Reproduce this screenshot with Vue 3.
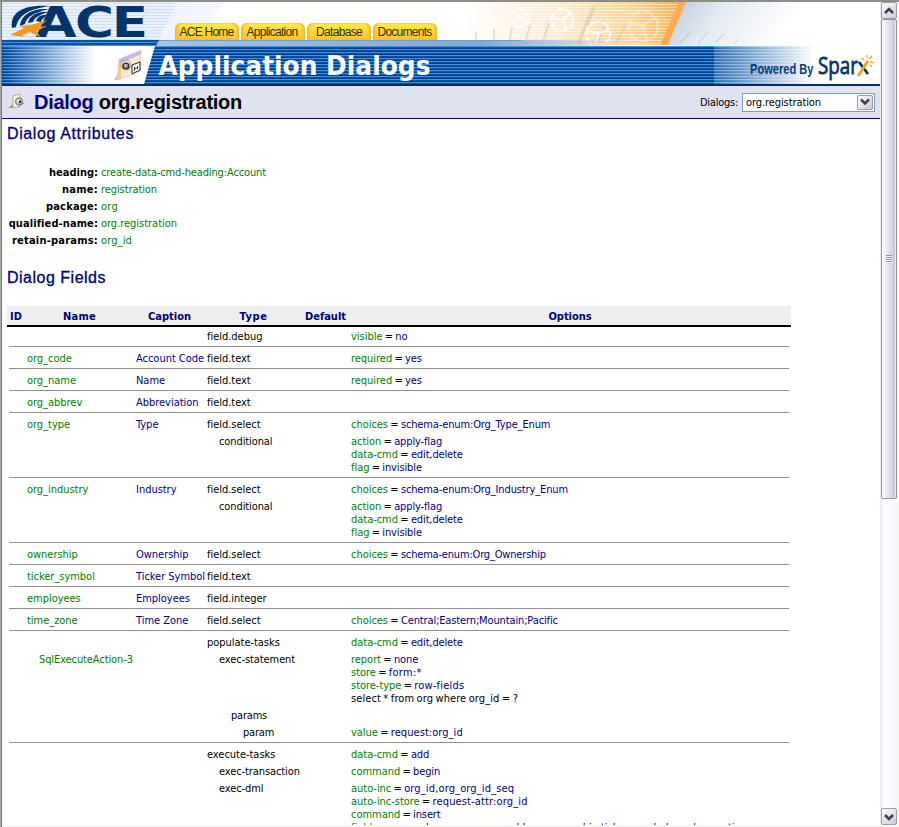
<script setup>
const tabs = [
  { label: 'ACE Home', width: 54, shift: 0 },
  { label: 'Application', width: 51, shift: -1 },
  { label: 'Database', width: 46, shift: 1 },
  { label: 'Documents', width: 54, shift: 0 },
]

const attributes = [
  ['heading', 'create-data-cmd-heading:Account', 49, 165],
  ['name', 'registration', 36, 56],
  ['package', 'org', 52, 17],
  ['qualified-name', 'org.registration', 89, 76],
  ['retain-params', 'org_id', 86, 31],
]

const columns = [['ID', 12], ['Name', 33], ['Caption', 43], ['Type', 28], ['Default', 41], ['Options', 43]]

const groups = [
  [{ type: 'field.debug', options: [['visible', 'no']] }],
  [{ name: 'org_code', caption: 'Account Code', type: 'field.text', options: [['required', 'yes']] }],
  [{ name: 'org_name', caption: 'Name', type: 'field.text', options: [['required', 'yes']] }],
  [{ name: 'org_abbrev', caption: 'Abbreviation', type: 'field.text' }],
  [
    { name: 'org_type', caption: 'Type', type: 'field.select', options: [['choices', 'schema-enum:Org_Type_Enum']] },
    { type: 'conditional', level: 1, options: [['action', 'apply-flag'], ['data-cmd', 'edit,delete'], ['flag', 'invisible']] },
  ],
  [
    { name: 'org_industry', caption: 'Industry', type: 'field.select', options: [['choices', 'schema-enum:Org_Industry_Enum']] },
    { type: 'conditional', level: 1, options: [['action', 'apply-flag'], ['data-cmd', 'edit,delete'], ['flag', 'invisible']] },
  ],
  [{ name: 'ownership', caption: 'Ownership', type: 'field.select', options: [['choices', 'schema-enum:Org_Ownership', 145]] }],
  [{ name: 'ticker_symbol', caption: 'Ticker Symbol', type: 'field.text' }],
  [{ name: 'employees', caption: 'Employees', type: 'field.integer' }],
  [{ name: 'time_zone', caption: 'Time Zone', type: 'field.select', options: [['choices', 'Central;Eastern;Mountain;Pacific']] }],
  [
    { type: 'populate-tasks', options: [['data-cmd', 'edit,delete']] },
    {
      name: 'SqlExecuteAction-3', nested: true, type: 'exec-statement', level: 1,
      options: [['report', 'none'], ['store', 'form:*', 33], ['store-type', 'row-fields', 50], ['select * from org where org_id = ?', '', 167]],
    },
    { type: 'params', level: 2 },
    { type: 'param', level: 3, options: [['value', 'request:org_id', 72]] },
  ],
  [
    { type: 'execute-tasks', options: [['data-cmd', 'add']] },
    { type: 'exec-transaction', level: 1, options: [['command', 'begin']] },
    {
      type: 'exec-dml', level: 1,
      options: [
        ['auto-inc', 'org_id,org_org_id_seq', 110],
        ['auto-inc-store', 'request-attr:org_id', 95],
        ['command', 'insert'],
        ['fields', 'org_code,org_name,org_abbrev,ownership,ticker_symbol,employees,time_zone', 388],
      ],
    },
  ],
]

// Tracks the letters of an inline-block so that it takes the given width.
const vFit = {
  mounted(el, { value }) {
    if (!value) return
    el.style.letterSpacing = '0px'
    const width = el.getBoundingClientRect().width
    el.style.letterSpacing = `${(value - width) / el.textContent.length}px`
  },
}
</script>

<template>
  <div class="window">
    <main class="page">
      <header class="banner">
        <svg class="art" width="878" height="84" viewBox="2 2 878 84">
          <defs>
            <pattern id="pale" width="4" height="3" patternUnits="userSpaceOnUse">
              <rect width="4" height="3" fill="#e9f1fb" /><rect width="4" height="1" fill="#d3e0f3" />
            </pattern>
            <pattern id="blue" width="4" height="3" patternUnits="userSpaceOnUse">
              <rect width="4" height="3" fill="#003c8c" /><rect width="4" height="1" y="1" fill="#3f93dc" /><rect width="4" height="1" y="2" fill="#0a52a8" />
            </pattern>
            <pattern id="cream" width="4" height="3" patternUnits="userSpaceOnUse">
              <rect width="4" height="1" y="1" fill="#fff" opacity=".55" />
            </pattern>
            <linearGradient id="fadeIn"><stop offset="0" stop-color="#fff" stop-opacity="0" /><stop offset="1" stop-color="#fff" /></linearGradient>
            <linearGradient id="orange"><stop offset="0" stop-color="#fff" /><stop offset=".45" stop-color="#fdebcf" /><stop offset=".8" stop-color="#fdd391" /><stop offset="1" stop-color="#fdb04c" /></linearGradient>
            <linearGradient id="steel" x2="1" y2=".25"><stop offset="0" stop-color="#b9c9dc" /><stop offset=".45" stop-color="#e5ebf2" /><stop offset="1" stop-color="#fff" /></linearGradient>
            <linearGradient id="band"><stop offset="0" stop-color="#a9c4e6" /><stop offset="1" stop-color="#7fa8d4" /></linearGradient>
            <linearGradient id="bandOut"><stop offset="0" stop-color="#7fa8d4" /><stop offset="1" stop-color="#7fa8d4" stop-opacity="0" /></linearGradient>
          </defs>
          <rect x="2" y="2" width="879" height="84" fill="#fff" />
          <path d="M2 2H177L157 45H2Z" fill="url(#pale)" />
          <path d="M177 2H225L196 40H160Z" fill="#eef3fc" />
          <rect x="170" y="2" width="130" height="38" fill="url(#fadeIn)" />
          <path d="M462 2H681L663 45H462Z" fill="url(#orange)" />
          <path d="M462 2H681L663 45H462Z" fill="url(#cream)" />
          <path d="M685 2H800V45H667Z" fill="url(#steel)" />
          <path d="M679 2H686L668 45H660Z" fill="#ffab51" />
          <g fill="none" stroke="#d8b6a0" stroke-width="2" opacity=".4">
            <path d="M476 32V44M494 29V44M512 27L509 44M530 25L525 44M549 23L542 44M606 24L597 44M627 23L615 44" />
            <path d="M594 7L578 44" stroke-width="4" />
            <path d="M690 32L680 43M708 32L698 43M724 34L716 42M738 39L734 44" stroke="#7f93aa" stroke-width="1" />
          </g>
          <g fill="none" stroke="#fff" stroke-width="2.500" opacity=".8">
            <circle cx="520" cy="18" r="9" stroke-dasharray="8 2" /><path d="M514 13L520 19L527 14" />
            <circle cx="562" cy="20" r="11" stroke-dasharray="9 2" /><path d="M551 18L562 20L571 14M562 20L567 29" />
            <circle cx="598" cy="34" r="12" stroke-dasharray="10 2" /><path d="M587 31L599 33L609 30M599 33L596 44" />
            <g opacity=".45"><circle cx="643" cy="26" r="15" stroke-dasharray="12 2" /><path d="M629 23L643 26L655 17M643 26L647 39" /></g>
          </g>
          <path d="M152 40H482V46H152Z" fill="url(#band)" />
          <rect x="482" y="40" width="145" height="6" fill="url(#bandOut)" />
          <rect x="152" y="40" width="370" height="1" fill="#7a9dc4" />
          <rect x="2" y="46" width="712" height="38" fill="url(#blue)" />
          <rect x="714" y="46" width="167" height="38" fill="url(#blue)" opacity=".78" />
          <rect x="714" y="46" width="100" height="38" fill="url(#fadeIn)" />
          <rect x="813" y="46" width="68" height="38" fill="#fff" />
          <rect x="2" y="46" width="93" height="38" fill="url(#fadeIn)" />
          <path d="M94 46H155L144 84H94Z" fill="#fff" />
          <path d="M2 40H159L156 46H2Z" fill="#0d4fa5" />
          <path d="M2 42.500H158M2 45.500H156" stroke="#5ba2df" stroke-width=".8" />
          <rect x="2" y="84" width="879" height="2" fill="#002e66" />
          <g fill="#04346a">
            <path d="M12 28C10 13 22 4 50 6C30 9 19 14 16 27Z" />
            <path d="M20 26C21 14 33 8 49 9C35 12 26 17 25 24Z" />
            <path d="M28 23C30 15 38 11 48 12C39 15 34 18 33 22Z" />
            <path d="M36 21C38 16 42 14 48 15C43 18 41 20 41 22Z" />
          </g>
          <text transform="scale(1.25 1)" x="28.500 60 89.500" y="37" class="logo">ACE</text>
          <path d="M10 35L24 28L20 26L31 25L47 20L39 27L47 26L37 31L40 37L30 32L22 35L25 37Z" fill="#f8951d" />
          <path d="M119 60L141 51L140 71L118 80Z" fill="#faeacb" stroke="#cbbda6" stroke-width=".6" />
          <path d="M119 59L141 50V54L119 64Z" fill="#c3b8e8" />
          <path d="M118 64L121 62V78L118 80Z" fill="#f3c98f" />
          <path d="M114 80L118 73V80Z" fill="#c9c9c9" />
          <circle cx="126" cy="65" r="5" fill="none" stroke="#a4a4a4" /><circle cx="126" cy="66" r="3" fill="#888" stroke="#222" stroke-width="1.200" /><circle cx="125.500" cy="65.500" r="1" fill="#fff" />
          <path d="M132 65L140 62V70L132 74Z" fill="#fff" stroke="#222" /><path d="M134.500 67V71M137.500 66V69M134 69L138 67.500" stroke="#222" stroke-width=".8" />
          <text x="158.500" y="75" textLength="272" lengthAdjust="spacingAndGlyphs" class="banner-title">Application Dialogs</text>
          <text x="750" y="74" textLength="63.500" lengthAdjust="spacingAndGlyphs" class="powered">Powered By</text>
          <text x="818" y="74" textLength="40" lengthAdjust="spacingAndGlyphs" class="sparx">Spar</text>
          <path d="M859 62L868 74" stroke="#003468" stroke-width="2.600" />
          <path d="M858 76L868 61" stroke="#f6a21c" stroke-width="3" />
          <path d="M869 59L872 56M870 62L874 63M867 58V55M864 60L862 58M870 65L872 67" stroke="#f6a21c" stroke-width="1.200" />
        </svg>
        <nav class="tabs">
          <a v-for="tab in tabs" :key="tab.label" class="tab">
            <span v-fit="tab.width" class="fit" :style="{ marginLeft: tab.shift + 'px' }">{{ tab.label }}</span>
          </a>
        </nav>
      </header>

      <section class="titlebar">
        <svg width="18" height="18" viewBox="0 0 18 18">
          <path d="M5 3L12 1V13L5 15Z" fill="#fff7dc" stroke="#a3a08c" stroke-width=".8" />
          <path d="M0 15L5 11V15Z" fill="#9c9c9c" />
          <circle cx="11" cy="8.500" r="3.600" fill="#bbb" stroke="#777" /><circle cx="10.500" cy="8" r="1.400" fill="#fff" /><circle cx="12" cy="8.800" r="1.200" fill="#222" />
          <path d="M10 14L16 10" stroke="#888" />
        </svg>
        <h1><span v-fit="208" class="fit"><b>Dialog</b> org.registration</span></h1>
        <label><span v-fit="38" class="fit">Dialogs:</span></label>
        <div class="select">
          <span v-fit="75" class="fit">org.registration</span>
          <i class="drop"><svg width="10" height="8" viewBox="0 0 10 8"><path d="M1 1.500L5 5.500L9 1.500" fill="none" stroke="#3c4454" stroke-width="2.600" /></svg></i>
        </div>
      </section>

      <h2><span v-fit="127" class="fit">Dialog Attributes</span></h2>
      <dl class="attributes">
        <template v-for="[key, value, keyWidth, valueWidth] in attributes" :key="key">
          <dt><span v-fit="keyWidth" class="fit">{{ key }}:</span></dt>
          <dd><span v-fit="valueWidth" class="fit">{{ value }}</span></dd>
        </template>
      </dl>

      <h2 class="second"><span v-fit="99" class="fit">Dialog Fields</span></h2>
      <div class="fields">
        <div class="row head">
          <span v-for="[column, width] in columns" :key="column"><span v-fit="width" class="fit">{{ column }}</span></span>
        </div>
        <template v-for="(group, g) in groups" :key="g">
          <div v-for="(row, r) in group" :key="r" class="row">
            <span></span>
            <span class="key" :class="{ nested: row.nested }">{{ row.name }}</span>
            <span class="val">{{ row.caption }}</span>
            <span :class="'level' + (row.level || 0)">{{ row.type }}</span>
            <span></span>
            <span class="options">
              <div v-for="([key, value, width], o) in row.options || []" :key="o">
                <template v-if="value"><span class="key">{{ key }}</span> = <span v-fit="width" class="val" :class="{ fit: width }">{{ value }}</span></template>
                <span v-else v-fit="width" class="fit">{{ key }}</span>
              </div>
            </span>
          </div>
          <hr v-if="g < groups.length - 1" />
        </template>
      </div>
    </main>

    <aside class="scrollbar">
      <i class="button"><svg width="10" height="8" viewBox="0 0 10 8"><path d="M1 6L5 2L9 6" fill="none" stroke="#3c4050" stroke-width="2.600" /></svg></i>
      <i class="thumb"><i class="grip"></i></i>
      <i class="button end"><svg width="10" height="8" viewBox="0 0 10 8"><path d="M1 2L5 6L9 2" fill="none" stroke="#3c4050" stroke-width="2.600" /></svg></i>
    </aside>
  </div>
</template>

<style>
body { margin: 0; overflow: hidden; }
</style>

<style scoped>
.window {
  display: flex;
  box-sizing: border-box;
  width: 899px;
  height: 827px;
  padding: 2px;
  background: linear-gradient(#8d8d87 2px, transparent 2px), linear-gradient(90deg, #aaaaa6 1px, #77777a 1px, #77777a 2px, #f7f6f2 2px);
  font: 11px/13px "DejaVu Sans Condensed", "DejaVu Sans", sans-serif;
  font-stretch: condensed;
  color: #000;
}
.page { width: 878px; height: 823px; overflow: hidden; background: #fff; }
.fit { display: inline-block; white-space: pre; }

.banner { display: grid; height: 84px; }
.banner > * { grid-area: 1 / 1; }
.art { display: block; }
.logo { font: bold 42.5px "DejaVu Sans", sans-serif; fill: #04346a; }
.banner-title { font: bold 26px "DejaVu Sans", sans-serif; fill: #fff; }
.powered { font: bold 14px "Liberation Sans", sans-serif; fill: #0a3c74; }
.sparx { font: 24px "Open Sans", sans-serif; fill: #003468; stroke: #003468; stroke-width: .8; }
.tabs { display: flex; gap: 2px; padding: 21px 0 0 172.5px; }
.tab {
  display: flex;
  justify-content: center;
  width: 64px;
  height: 17px;
  border-radius: 6px 6px 0 0;
  background: linear-gradient(#fff04a, #ffd63a 45%, #ffc22e);
  box-shadow: inset 2px 0 2px #f8b828, inset -2px 0 2px #f8b828;
  font: 12px/18px "Liberation Sans", sans-serif;
  color: #333300;
}

.titlebar {
  display: flex;
  align-items: center;
  box-sizing: border-box;
  height: 33px;
  padding: 0 5px 0 6px;
  border-bottom: 1px solid #000080;
  background: #e0e2f0;
}
h1 { flex: 1; margin: 0 0 0 8px; font: bold 20px/24px "Liberation Sans", sans-serif; }
h1 b { color: #000080; }
.select {
  display: flex;
  align-items: center;
  justify-content: space-between;
  box-sizing: border-box;
  width: 133px;
  height: 19px;
  margin-left: 4px;
  padding: 1px 1px 1px 3px;
  border: 1px solid #7f9db9;
  background: #fff;
}
.drop {
  display: flex;
  align-items: center;
  justify-content: center;
  box-sizing: border-box;
  width: 16px;
  height: 15px;
  border: 1px solid #9a9aa8;
  border-radius: 2px;
  background: linear-gradient(135deg, #fff, #c9cbd8);
}

h2 { margin: 5px 0 0 5px; font: 16px/20px "Liberation Sans", sans-serif; color: #000080; -webkit-text-stroke: .3px #000080; }
.second { margin-top: 19px; }
.attributes { display: grid; grid-template-columns: 92px auto; margin: 20px 0 0 5px; }
.attributes dt { padding: 2px 1px 2px 0; font-weight: bold; text-align: right; white-space: nowrap; }
.attributes dd { margin: 0; padding: 2px; color: #008000; }

.fields { width: 784px; margin: 18px 0 0 5px; }
.row { display: grid; grid-template-columns: 18px 109px 71px 97px 47px 442px; height: auto; min-height: 17px; }
.row > span { padding: 3px 2px 1px; white-space: nowrap; letter-spacing: -.03px; }
.row > .options { word-spacing: -.8px; }
.options > div { height: 13px; }
.options .val { letter-spacing: -.13px; }
.head { height: 19px; border-bottom: 2px solid #000; background: #eee; font-weight: bold; color: #000080; }
.head > span { display: flex; justify-content: center; padding: 4px 0 2px; }
.key { color: #008000; }
.val { color: #000080; }
.row > .nested { padding-left: 14px; letter-spacing: -.1px; }
.row > .level1 { padding-left: 14px; letter-spacing: -.1px; }
.row > .level2 { padding-left: 26px; letter-spacing: -.2px; }
.row > .level3 { padding-left: 38px; letter-spacing: -.2px; }
hr { height: 1px; margin: 2px; border: 0; background: #8e8e8e; }

.scrollbar {
  display: flex;
  flex-direction: column;
  box-sizing: border-box;
  width: 17px;
  height: 823px;
  padding: 0 0 0 1px;
  background: linear-gradient(90deg, #ecebf4, #fdfdff 30%, #f7f6fb);
}
.button {
  display: flex;
  align-items: center;
  justify-content: center;
  box-sizing: border-box;
  width: 16px;
  height: 17px;
  border: 1px solid #9e9eac;
  border-radius: 2px;
  background: linear-gradient(135deg, #fff, #c8cad8);
}
.end { margin-top: auto; }
.thumb {
  display: flex;
  align-items: center;
  justify-content: center;
  box-sizing: border-box;
  width: 16px;
  height: 480px;
  border: 1px solid #93939f;
  border-radius: 2px;
  background: linear-gradient(90deg, #fff 1px, #f2f0f8 3px, #dddbe8 60%, #c6c8d6 90%, #fff);
}
.grip { width: 6px; height: 8px; background: repeating-linear-gradient(#8795ad 0 1px, #f6f6fb 1px 2px); }
</style>
